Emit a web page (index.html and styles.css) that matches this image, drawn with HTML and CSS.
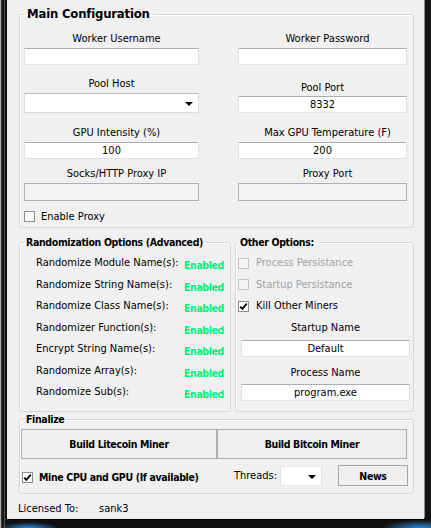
FILE: index.html
```html
<!DOCTYPE html>
<html>
<head>
<meta charset="utf-8">
<link rel="stylesheet" href="styles.css">
</head>
<body>
<div class="window">
  <div class="client">
    <fieldset class="group main">
      <legend class="title-lg">Main Configuration</legend>
      <div class="grid">
        <div class="cell"><span class="lbl shift-l">Worker Username</span><div class="tb"></div></div>
        <div class="cell"><span class="lbl shift-r">Worker Password</span><div class="tb"></div></div>
        <div class="cell"><span class="lbl">Pool Host</span><div class="combo"><span class="arrow"></span></div></div>
        <div class="cell"><span class="lbl port">Pool Port</span><div class="tb">8332</div></div>
        <div class="cell"><span class="lbl shift-l">GPU Intensity (%)</span><div class="tb">100</div></div>
        <div class="cell"><span class="lbl shift-r">Max GPU Temperature (F)</span><div class="tb">200</div></div>
        <div class="cell"><span class="lbl shift-l">Socks/HTTP Proxy IP</span><div class="tb disabled"></div></div>
        <div class="cell"><span class="lbl shift-r">Proxy Port</span><div class="tb disabled"></div></div>
      </div>
      <div class="chk proxy"><span class="box"></span><span>Enable Proxy</span></div>
    </fieldset>

    <div class="lower">
      <fieldset class="group rand">
        <legend class="title rand-title">Randomization Options (Advanced)</legend>
        <div class="rrow"><span class="rlabel">Randomize Module Name(s):</span><span class="en">Enabled</span></div>
        <div class="rrow"><span class="rlabel">Randomize String Name(s):</span><span class="en">Enabled</span></div>
        <div class="rrow"><span class="rlabel">Randomize Class Name(s):</span><span class="en">Enabled</span></div>
        <div class="rrow"><span class="rlabel">Randomizer Function(s):</span><span class="en">Enabled</span></div>
        <div class="rrow"><span class="rlabel">Encrypt String Name(s):</span><span class="en">Enabled</span></div>
        <div class="rrow"><span class="rlabel">Randomize Array(s):</span><span class="en">Enabled</span></div>
        <div class="rrow"><span class="rlabel">Randomize Sub(s):</span><span class="en">Enabled</span></div>
      </fieldset>
      <fieldset class="group other">
        <legend class="title">Other Options:</legend>
        <div class="chk orow off"><span class="box"></span><span>Process Persistance</span></div>
        <div class="chk orow off"><span class="box"></span><span>Startup Persistance</span></div>
        <div class="chk orow"><span class="box checked"><svg width="9" height="9" viewBox="0 0 9 9"><path d="M1.2 4.6 L3.4 6.9 L7.8 1.6" fill="none" stroke="#000" stroke-width="1.7"/></svg></span><span>Kill Other Miners</span></div>
        <span class="olbl first">Startup Name</span>
        <div class="tb otb">Default</div>
        <span class="olbl second">Process Name</span>
        <div class="tb otb tb-last">program.exe</div>
      </fieldset>
    </div>

    <fieldset class="group final">
      <legend class="title final-title">Finalize</legend>
      <div class="buttons">
        <div class="btn ltc">Build Litecoin Miner</div>
        <div class="btn btc">Build Bitcoin Miner</div>
      </div>
      <div class="frow">
        <div class="chk bold"><span class="box checked"><svg width="9" height="9" viewBox="0 0 9 9"><path d="M1.2 4.6 L3.4 6.9 L7.8 1.6" fill="none" stroke="#000" stroke-width="1.7"/></svg></span><span>Mine CPU and GPU (If available)</span></div>
        <span class="threads">Threads:</span>
        <div class="combo small"><span class="arrow"></span></div>
        <div class="btn news">News</div>
      </div>
    </fieldset>

    <div class="license"><span class="lic-l">Licensed To:</span><span>sank3</span></div>
  </div>
</div>
</body>
</html>
```
FILE: styles.css
```css
* { box-sizing: border-box; }
html, body { margin: 0; padding: 0; background: #000; }
body {
  font-family: "DejaVu Sans Condensed", "DejaVu Sans", sans-serif;
  font-size: 11px;
  color: #000;
}
.window {
  width: 431px;
  height: 528px;
  padding: 0 7px 10px 6px;
  border-left: 1px solid #a8a8a8;
  background:
    radial-gradient(ellipse 30px 6px at 28px 528px, #2d8ad8 0, rgba(45,138,216,0) 100%),
    radial-gradient(ellipse 40px 8px at 420px 528px, #2d8ad8 0, rgba(45,138,216,0) 100%),
    linear-gradient(to right, #3a3a3a 0, #3a3a3a 1px, #151515 1px, #151515 3px, #555 3px, #555 4px, #111 4px);
}
.client {
  width: 417px;
  height: 518px;
  background: #f0f0f0;
  display: flex;
  flex-direction: column;
  box-shadow: 1px 0 0 #8a8a8a, 0 1px 0 #e8e8e8, 0 2px 0 #000;
}
.group {
  margin: 0;
  padding: 0;
  border: 1px solid #d3d8dd;
  border-radius: 3px;
  box-shadow: inset 1px 1px 0 #fff;
  min-width: 0;
}
.title-lg {
  font-weight: bold;
  font-size: 13px;
  letter-spacing: -0.2px;
  line-height: 16px;
  padding: 0 3px;
  color: #000;
  white-space: nowrap;
}
.title {
  font-weight: bold;
  font-size: 10.5px;
  letter-spacing: -0.35px;
  line-height: 14px;
  padding: 0 2px;
  white-space: nowrap;
}
.rand-title { margin-left: -12px; }
.final-title { margin-left: 3px; }
.main {
  margin: 6px 10px 0 12px;
  padding: 10px 4px 4px 4px;
}
.grid {
  display: grid;
  grid-template-columns: 175px 169px;
  column-gap: 39px;
  grid-template-rows: 33px 48px 46px 42px;
  align-items: end;
}
.cell { display: flex; flex-direction: column; }
.lbl {
  display: block;
  text-align: center;
  line-height: 14px;
  height: 14px;
  margin-bottom: 2px;
  white-space: nowrap;
}
.lbl.port { margin-bottom: 1px; }
.shift-l { padding-left: 10px; }
.shift-r { padding-left: 10px; }
.tb {
  height: 17px;
  background: #fff;
  border: 1px solid #dfe3e8;
  border-top-color: #abadb3;
  text-align: center;
  font-size: 11px;
  line-height: 15px;
}
.tb.disabled {
  background: #f3f3f3;
  border-color: #adb1b5;
  height: 18px;
}
.combo {
  height: 20px;
  background: #fff;
  border: 1px solid #d9dde2;
  border-top-color: #b9bcc0;
  display: flex;
  align-items: center;
  justify-content: flex-end;
  padding-right: 5px;
}
.arrow {
  width: 0; height: 0;
  border-left: 4px solid transparent;
  border-right: 4px solid transparent;
  border-top: 4px solid #000;
  margin-top: 2px;
}
.chk {
  display: flex;
  align-items: center;
  line-height: 13px;
  height: 13px;
  white-space: nowrap;
}
.box {
  width: 11px;
  height: 11px;
  border: 1px solid #8e8f8f;
  background: #fff;
  flex: none;
  display: flex;
  align-items: center;
  justify-content: center;
}
.proxy { margin-top: 9px; }
.proxy .box { margin-right: 6px; }

.lower {
  display: flex;
  height: 177px;
  margin: 7px 10px 0 12px;
}
.rand {
  width: 212px;
  padding: 7px 0 0 16px;
}
.rrow {
  display: flex;
  height: 21.5px;
  line-height: 14px;
}
.rlabel { width: 148px; white-space: nowrap; }
.en {
  color: #00f07c;
  font-weight: bold;
  font-size: 10.5px;
  letter-spacing: -0.4px;
  margin-top: 2px;
}
.other {
  margin-left: 4px;
  flex: 1;
  padding: 7px 0 0 2px;
}
.orow { height: 14px; line-height: 14px; margin-bottom: 7.5px; }
.orow .box { margin-right: 7px; }
.orow.off { color: #a3a3a3; }
.orow.off .box { border-color: #c4c4c4; background: #f4f4f4; }
.olbl {
  display: block;
  line-height: 14px;
  text-align: center;
  margin-left: 3px;
  width: 169px;
}
.olbl.first { margin-top: 0; }
.olbl.second { margin-top: 9px; }
.otb { margin-left: 3px; width: 169px; margin-top: 5px; }
.tb-last { margin-top: 4px; }

.final {
  margin: 0 10px 0 12px;
  padding: 3px 5px 7px 1px;
}
.buttons { display: flex; height: 30px; }
.btn {
  border: 1px solid #adadad;
  background: #efefef;
  font-weight: bold;
  font-size: 10.5px;
  letter-spacing: -0.35px;
  display: flex;
  align-items: center;
  justify-content: center;
}
.ltc { width: 196px; }
.btc { width: 190px; }
.frow {
  display: flex;
  align-items: center;
  margin-top: 6px;
  height: 21px;
}
.bold { font-weight: bold; font-size: 10.5px; letter-spacing: -0.35px; margin-left: 1px; margin-top: 4px; }
.bold .box { margin-right: 6px; }
.threads { margin-left: auto; }
.combo.small { width: 42px; margin-left: 3px; padding-right: 5px; border-color: #e0e3e7; margin-top: 1px; }
.news { width: 70px; height: 21px; margin-left: 16px; border-color: #a6a6a6; }

.license {
  margin: 8px 0 0 11px;
  line-height: 14px;
}
.lic-l { display: inline-block; width: 81px; }
```
